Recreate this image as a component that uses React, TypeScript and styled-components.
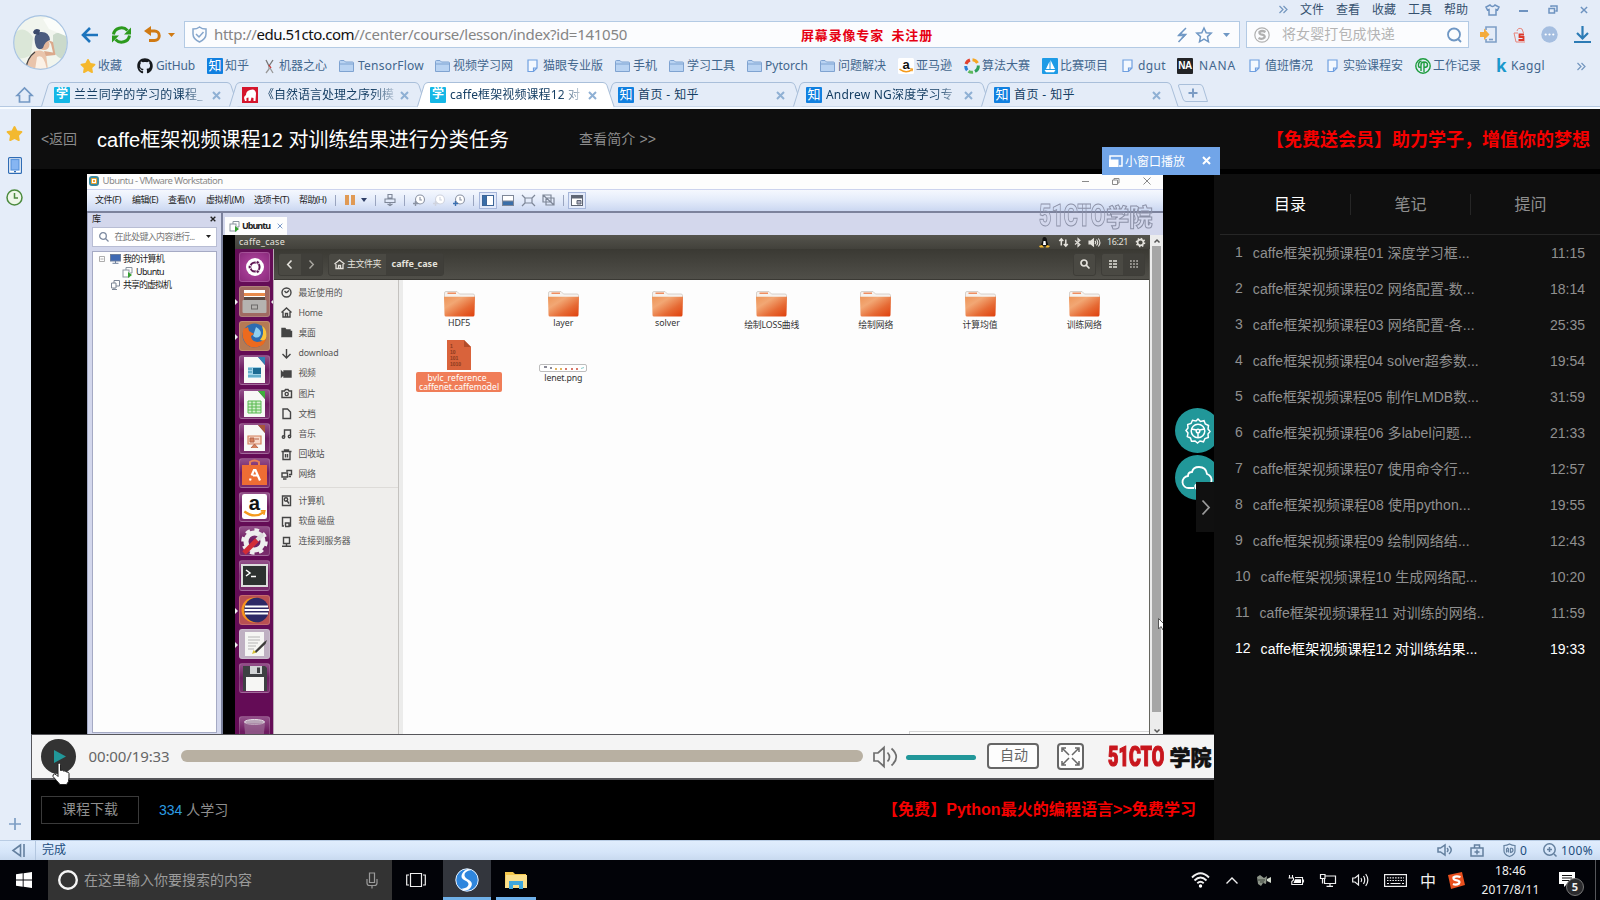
import React, { useLayoutEffect, useRef, useState } from "react";
import styled, { createGlobalStyle, css } from "styled-components";
import { FaGithub, FaStar } from "react-icons/fa";

const ui = `"Noto Sans", "Noto Sans CJK SC", sans-serif`;
const arial = `"Liberation Sans", "Noto Sans CJK SC", sans-serif`;

const Global = createGlobalStyle`
  * { box-sizing: border-box; }
  body { margin: 0; background: #000; overflow: hidden; font-family: ${ui}; }
  svg { display: block; flex: none; overflow: visible; }
`;

/* ---------- shared pieces ---------- */

const FitBox = styled.span<{ $w: number }>`
  display: inline-block;
  width: ${(p) => p.$w}px;
  white-space: pre;
  flex: none;
`;

/** Tracks a label out (or in) so that it fills the given width. */
function Fit({ w, children }: { w: number; children: string }) {
  const ref = useRef<HTMLSpanElement>(null);
  const [spacing, setSpacing] = useState(0);
  useLayoutEffect(() => {
    const el = ref.current;
    if (!el) return;
    setSpacing((w - el.getBoundingClientRect().width) / Array.from(children).length);
  }, [w, children]);
  return (
    <FitBox $w={w}>
      <span ref={ref} style={{ letterSpacing: spacing }}>{children}</span>
    </FitBox>
  );
}

type IconProps = {
  w: number; h?: number; vb?: string; color?: string; fill?: string; sw?: number; children?: React.ReactNode;
};
function Icon({ w, h = w, vb = `0 0 ${w} ${h}`, color = "currentColor", fill = "none", sw = 1.5, children }: IconProps) {
  return (
    <svg width={w} height={h} viewBox={vb} fill={fill} stroke={sw ? color : "none"} strokeWidth={sw || 1}>
      {children}
    </svg>
  );
}

const Cell = styled.div<{ $w: number }>`
  flex: none;
  width: ${(p) => p.$w}px;
  display: flex;
  align-items: center;
  white-space: nowrap;
`;
const Spring = styled.div`flex: 1;`;

const Screen = styled.div`
  width: 1600px;
  height: 900px;
  overflow: hidden;
  display: flex;
  flex-direction: column;
`;

/* ---------- browser chrome ---------- */

const Chrome = styled.header`
  height: 109px;
  background: #e4ecf8;
  color: #2f5379;
  font-size: 12px;
  line-height: 16px;
`;
const ChromeTop = styled.div`display: flex; height: 82px;`;
const AvatarCol = styled.div`width: 78px; padding: 15px 0 0 13px;`;
const ChromeRows = styled.div`flex: 1; display: flex; flex-direction: column;`;
const MenuRow = styled.div`height: 21px; display: flex; align-items: center; padding-bottom: 2px; color: #34506e;`;
const AddressRow = styled.div`height: 27px; display: flex; align-items: center; padding-left: 3px;`;
const BookmarkRow = styled.div`height: 34px; display: flex; align-items: center; padding: 2px 0 0 2px; color: #42668d;`;
const Field = styled.div<{ $w: number; $ml?: number }>`
  width: ${(p) => p.$w}px;
  margin-left: ${(p) => p.$ml ?? 0}px;
  height: 27px;
  flex: none;
  background: #fbfcfe;
  border: 1px solid #b3cae4;
  display: flex;
  align-items: center;
  padding-left: 7px;
  color: #6f97c4;
  white-space: nowrap;
`;
const Url = styled.div`
  display: flex;
  padding: 0 0 2px 7px;
  font-size: 15px;
  line-height: 22px;
  color: #858585;
  b { font-weight: 400; color: #111; }
`;
const Unregistered = styled.div`
  margin-left: 174px;
  width: 376px;
  color: #e60012;
  font: 700 13px/20px "Noto Sans CJK SC", sans-serif;
`;
const Query = styled.div`width: 177px; padding: 0 0 1px 12px; font-size: 14px; color: #b4b4b4;`;

const Avatar = () => (
  <Icon w={55} h={55} vb="0 0 55 55" sw={0}>
    <clipPath id="av"><circle cx="27.5" cy="27.5" r="26.5" /></clipPath>
    <g clipPath="url(#av)">
      <rect width="55" height="55" fill="#f1f5ee" />
      <path d="M0 20 Q10 8 20 22 L18 40 Q8 46 0 42Z" fill="#dbe7d8" />
      <path d="M40 20 Q48 14 55 24 V46 Q44 44 40 36Z" fill="#cbdacb" />
      <path d="M30 4 Q42 0 55 12 V22 L36 14Z" fill="#fbfdfa" />
      <path d="M22 36 Q30 34 33 39 L35 55 H12 Q14 42 22 36Z" fill="#e9c4ab" />
      <path d="M24 42 Q31 38 34 55 H22Z" fill="#fbf1e6" />
      <path d="M31 36 L40 37.500 L38 29 L35 25 L40 27 L42.500 40 L33 41Z" fill="#dba98c" />
      <circle cx="31" cy="29.500" r="5.500" fill="#e3b79b" />
      <path d="M22 28 Q20 19 27 17 Q36 16 37 25 Q32 26 30 33 Q24 37 22 28Z" fill="#4b5c7e" />
      <path d="M20 17 Q22 12 27 15 L26 20 L21 19Z" fill="#3b4a6c" />
      <path d="M22 37 Q14 43 13 54" stroke="#444" strokeWidth="1.3" fill="none" />
    </g>
    <circle cx="27.5" cy="27.5" r="26.8" stroke="#a9c4e2" strokeWidth="1.2" />
  </Icon>
);

const FolderIcon = () => (
  <Icon w={15} h={14} color="#7fa3d1" sw={1} fill="#b9d3f2">
    <path d="M.5 12.5V2.5Q.5 1.5 1.5 1.5H5L6.5 3H13.5Q14.5 3 14.5 4V12.5Z" />
    <path d="M.5 5H14.5" />
  </Icon>
);
const PageIcon = () => (
  <Icon w={11} h={14} color="#6f9fe0" sw={1.2} fill="#f3f8ff">
    <path d="M1 1H10V9L6.500 12.500H1Z M10 9H6.500V12.500" />
  </Icon>
);
const Tile = styled.div<{ $bg: string; $size?: number; $c?: string }>`
  width: ${(p) => p.$size ?? 16}px;
  height: ${(p) => p.$size ?? 16}px;
  flex: none;
  border-radius: 1px;
  background: ${(p) => p.$bg};
  color: ${(p) => p.$c ?? "#fff"};
  font: 400 13px/15px ${arial};
  text-align: center;
`;
const Zhi = () => <Tile $bg="#1180e0">知</Tile>;
const XueTile = styled(Tile)`font-weight: 700; font-size: 12px;`;
const Xue = () => <XueTile $bg="#14b7e6">学</XueTile>;
const Na = styled(Tile)`font-weight: 700; font-size: 10px; letter-spacing: -0.4px; line-height: 16px;`;
const Kaggle = styled.b`font: 700 17px/18px ${ui}; color: #1a98cc;`;

const AmazonMark = ({ s = 16 }: { s?: number }) => (
  <Icon w={s} vb="0 0 16 16" sw={0}>
    <rect width="16" height="16" rx="1.500" fill="#fff" />
    <text x="8" y="10.500" textAnchor="middle" fontFamily="Liberation Sans" fontWeight="700" fontSize="13" fill="#111">a</text>
    <path d="M1.500 11.200Q8 16 14 11.600" stroke="#f59a1b" strokeWidth="1.500" fill="none" />
    <path d="M12 10.800H14.600L14 13.400" stroke="#f59a1b" strokeWidth="1" fill="none" />
  </Icon>
);
const RingIcon = () => (
  <Icon w={16} sw={3}>
    <path d="M2 6A6.300 6.300 0 0 1 6 2" stroke="#e2412f" />
    <path d="M8.500 1.700A6.300 6.300 0 0 1 13.500 5" stroke="#f5a623" />
    <path d="M14.300 7.500A6.300 6.300 0 0 1 11 13.500" stroke="#2e9f5a" />
    <path d="M9 14.300A6.300 6.300 0 0 1 4.500 13.200" stroke="#5cb85c" />
    <path d="M3.200 12.200A6.300 6.300 0 0 1 1.700 8" stroke="#2c7fd6" />
  </Icon>
);
const BoatIcon = () => (
  <Icon w={16} sw={0}>
    <rect width="16" height="16" rx="1" fill="#1d9be6" />
    <path d="M8.500 2V11H13Z M7.500 3.500V11H4Z M2.500 12H13.500L12 14.300H4Z" fill="#fff" />
  </Icon>
);
const GreenIcon = () => (
  <Icon w={16} color="#1f9d3f" sw={1.4}>
    <circle cx="8" cy="8" r="7.200" />
    <path d="M9 3.500V14M6 13V7Q6 4 9 4Q12.500 4 12.500 7Q12.500 9.500 9 9.500M6.500 3Q3 4 3.500 8Q3.500 9.500 6 9.500" />
  </Icon>
);
const RobotIcon = () => (
  <Icon w={11} h={15} color="#999" sw={1.3}>
    <path d="M2 1L5 7L9 1" stroke="#777" />
    <path d="M5 7V10L2 14M6 9L9 14" />
    <path d="M5 6L7 9" stroke="#c33" />
  </Icon>
);

const bookmarks: [number, number, string, number, React.ReactNode][] = [
  [80, 98, "收藏", 24, <FaStar size={16} color="#f5b82e" />],
  [137, 156, "GitHub", 39, <FaGithub size={16} color="#16191d" />],
  [207, 225, "知乎", 24, <Zhi />],
  [264, 279, "机器之心", 48, <RobotIcon />],
  [339, 358, "TensorFlow", 66, <FolderIcon />],
  [435, 453, "视频学习网", 60, <FolderIcon />],
  [527, 543, "猫眼专业版", 60, <PageIcon />],
  [615, 633, "手机", 24, <FolderIcon />],
  [669, 687, "学习工具", 48, <FolderIcon />],
  [747, 765, "Pytorch", 43, <FolderIcon />],
  [820, 838, "问题解决", 48, <FolderIcon />],
  [898, 916, "亚马逊", 36, <AmazonMark />],
  [964, 982, "算法大赛", 48, <RingIcon />],
  [1042, 1060, "比赛项目", 48, <BoatIcon />],
  [1122, 1138, "dgut", 28, <PageIcon />],
  [1177, 1199, "NANA", 37, <Na $bg="#222326">NA</Na>],
  [1249, 1265, "值班情况", 48, <PageIcon />],
  [1327, 1343, "实验课程安", 60, <PageIcon />],
  [1415, 1433, "工作记录", 48, <GreenIcon />],
  [1496, 1511, "Kaggl", 34, <Kaggle>k</Kaggle>],
  [1577, 1600, "", 0, null],
];

const Chevrons = () => (
  <Icon w={9} h={9} color="#7396bf" sw={1.2}><path d="M.5 1L4 4.500L.5 8M4.500 1L8 4.500L4.500 8" /></Icon>
);

const TabRow = styled.div`
  height: 27px;
  display: flex;
  align-items: flex-start;
  background: linear-gradient(#e4ecf8 24px, #b5c9e2 24px, #b5c9e2 25px, #f7fbff 25px);
`;
const HomeCell = styled.div`width: 41px; padding: 5px 0 0 16px;`;
const TabBox = styled.div<{ $active?: boolean }>`
  width: 188px;
  height: 27px;
  position: relative;
  z-index: ${(p) => (p.$active ? 2 : 1)};
  display: flex;
  align-items: center;
  padding: 0 0 1px 13px;
  color: #153e63;
  > svg:first-child { position: absolute; left: 0; top: 0; }
`;
const TabFace = styled.div`position: relative; display: flex; align-items: center;`;
const TabText = styled.div<{ $faded?: boolean }>`
  width: 134px;
  margin: 0 4px 0 4px;
  white-space: nowrap;
  ${(p) => p.$faded && css`mask-image: linear-gradient(90deg, #000 110px, rgba(0, 0, 0, 0.2) 132px);`}
`;
const NewTab = styled.div`padding: 2px 0 0 9px;`;

const Cross = ({ s = 9, c = "#8fb0d4", sw = 2 }: { s?: number; c?: string; sw?: number }) => (
  <Icon w={s} vb="0 0 9 9" color={c} sw={sw}><path d="M1 1L8 8M8 1L1 8" /></Icon>
);

function Tab({ icon, text, w, active, faded }: { icon: React.ReactNode; text: string; w: number; active?: boolean; faded?: boolean }) {
  return (
    <TabBox $active={active}>
      <Icon w={198} h={27} color="#a9bfda" sw={1} fill={active ? "#fff" : "#e4ecf8"}>
        {active && <rect x="1" y="24" width="195" height="3" stroke="none" />}
        <path d="M.5 24.500L7 3.500Q8 .5 11 .5H186Q189 .5 190 3.500L197 24.500" />
      </Icon>
      <TabFace>
        {icon}
        <TabText $faded={faded}><Fit w={w}>{text}</Fit></TabText>
        <Cross />
      </TabFace>
    </TabBox>
  );
}

const ElephantIcon = () => (
  <Icon w={16} sw={0}>
    <rect width="16" height="16" fill="#d5152c" />
    <path d="M3 14L2 11Q2 9 4 8Q4 4 8 3Q13 1 14 6L13.500 14H11.500V11L9.500 10.500L8.500 14H6.500V10.500L4.500 11L4.500 14Z" fill="#fff" />
  </Icon>
);

function BrowserChrome() {
  return (
    <Chrome>
      <ChromeTop>
        <AvatarCol><Avatar /></AvatarCol>
        <ChromeRows>
          <MenuRow>
            <Spring />
            <Cell $w={21}><Chevrons /></Cell>
            <Cell $w={36}>文件</Cell>
            <Cell $w={36}>查看</Cell>
            <Cell $w={36}>收藏</Cell>
            <Cell $w={36}>工具</Cell>
            <Cell $w={41}>帮助</Cell>
            <Cell $w={34}>
              <Icon w={15} h={12} color="#6e93c0"><path d="M5 1L1 3L2.500 6L4 5.500V11H11V5.500L12.500 6L14 3L10 1Q7.500 4 5 1Z" /></Icon>
            </Cell>
            <Cell $w={29}><Icon w={10} h={9} color="#6e93c0" sw={2}><path d="M0 6H9" /></Icon></Cell>
            <Cell $w={32}><Icon w={10} h={9} color="#6e93c0"><path d="M1 3.500H6.500V8H1ZM3 2V1H9V6H7.500" /></Icon></Cell>
            <Cell $w={20}><Cross c="#6e93c0" sw={1.600} s={8} /></Cell>
          </MenuRow>
          <AddressRow>
            <Cell $w={30}><Icon w={18} h={16} color="#1d74bd" sw={2.600}><path d="M17 8H2M9 1L2 8L9 15" /></Icon></Cell>
            <Cell $w={33}>
              <Icon w={21} h={18} color="#2c9a1d" sw={3}>
                <path d="M2.500 8.500A8 7.500 0 0 1 16.500 4.500" /><path d="M18.500 9.500A8 7.500 0 0 1 4.500 13.500" />
                <path d="M20 1.500V8.500H13Z M1 16.500V9.500H8Z" fill="#2c9a1d" stroke="none" />
              </Icon>
            </Cell>
            <Cell $w={24}>
              <Icon w={17} h={17} color="#d07a13" sw={3}>
                <path d="M4 5H10.500A4.700 4.700 0 0 1 10.500 14.500H5" /><path d="M7 0V10L0 5Z" fill="#d07a13" stroke="none" />
              </Icon>
            </Cell>
            <Cell $w={16}><Icon w={7} h={4} sw={0} fill="#d07a13"><path d="M0 0H7L3.500 4Z" /></Icon></Cell>
            <Field $w={1056}>
              <Icon w={15} h={17} color="#86a6cc"><path d="M7.500 1Q10 3 14 3V8Q14 13 7.500 16Q1 13 1 8V3Q5 3 7.500 1ZM4 8L7 11L11.500 6" /></Icon>
              <Url>
                <Fit w={42.500}>http://</Fit><b><Fit w={97.500}>edu.51cto.com</Fit></b>
                <Fit w={273}>//center/course/lesson/index?id=141050</Fit>
              </Url>
              <Unregistered><Fit w={132}>屏幕录像专家  未注册</Fit></Unregistered>
              <Cell $w={19}><Icon w={10} h={16} sw={1.500}><path d="M9 1L2 8H8L1.500 15" /><path d="M5 5.500L2 8.500H5.500M5 7.500H8.500L5 11" /></Icon></Cell>
              <Cell $w={27}><Icon w={16} sw={1.500}><path d="M8 1L10.200 5.700L15.200 6.200L11.500 9.600L12.500 14.800L8 12.200L3.500 14.800L4.500 9.600L.8 6.200L5.800 5.700Z" /></Icon></Cell>
              <Icon w={7} h={4} sw={0} fill="#6f97c4"><path d="M0 0H7L3.500 4Z" /></Icon>
            </Field>
            <Field $w={223} $ml={6}>
              <Cell $w={16}>
                <Icon w={16} color="#b0b0b0" sw={1.200}><circle cx="8" cy="8" r="7.200" /><path d="M11.500 5Q8 3 5.500 5Q5 7 8 7.700Q11.500 8.500 10.500 10.500Q8 13 4.500 11" strokeWidth="2.300" /></Icon>
              </Cell>
              <Query><Fit w={113}>将女婴打包成快递</Fit></Query>
              <Cell $w={16}><Icon w={15} h={16} sw={1.800}><circle cx="7" cy="7.500" r="6" /><path d="M11 12L14 15" /></Icon></Cell>
            </Field>
            <Cell $w={44}>
              <Spring />
              <Cell $w={33}>
                <Icon w={17} h={17} color="#7d9ec6" sw={1.600}>
                  <path d="M6 4V1H16V16H6V13" /><path d="M9 13.500H13" /><path d="M0 6H4V2.500L9.500 8.500L4 14V11H0Z" fill="#f3ab3c" stroke="none" />
                </Icon>
              </Cell>
            </Cell>
            <Cell $w={28}>
              <Icon w={13} h={16} color="#e8847a" sw={1}><path d="M1 6L3 15H12M4 4Q5 0 9 2L10.500 6M1 6H5" /><path d="M11 7.500H6.500V10H10.500V13H5.500" stroke="#dc3b2c" strokeWidth="1.800" /></Icon>
            </Cell>
            <Cell $w={33}>
              <Icon w={17} sw={0} fill="#a5bee0"><circle cx="8.500" cy="8.500" r="8.200" /><g fill="#fff"><circle cx="4.700" cy="8.500" r="1.100" /><circle cx="8.500" cy="8.500" r="1.100" /><circle cx="12.300" cy="8.500" r="1.100" /></g></Icon>
            </Cell>
            <Icon w={17} h={17} color="#2c7bb5" sw={2.200}><path d="M8.500 0V12M3 7L8.500 12.500L14 7M0 16H17" /></Icon>
          </AddressRow>
          <BookmarkRow>
            {bookmarks.slice(0, -1).map(([x, tx, label, w, icon], i) => (
              <Cell key={i} $w={bookmarks[i + 1][0] - x}>
                <Cell $w={tx - x}>{icon}</Cell>
                <Fit w={w}>{label}</Fit>
              </Cell>
            ))}
            <Chevrons />
          </BookmarkRow>
        </ChromeRows>
      </ChromeTop>
      <TabRow>
        <HomeCell><Icon w={17} h={16} color="#7398c4" sw={1.700}><path d="M1 8.500L8.500 1L16 8.500H13.500V15H3.500V8.500Z" /></Icon></HomeCell>
        <Tab icon={<Xue />} text="兰兰同学的学习的课程_" w={129} faded />
        <Tab icon={<ElephantIcon />} text="《自然语言处理之序列模" w={132} faded />
        <Tab icon={<Xue />} text="caffe框架视频课程12 对" w={130} active faded />
        <Tab icon={<Zhi />} text="首页 - 知乎" w={61} />
        <Tab icon={<Zhi />} text="Andrew NG深度学习专" w={127} faded />
        <Tab icon={<Zhi />} text="首页 - 知乎" w={61} />
        <NewTab>
          <Icon w={30} h={18} color="#a9bfda" sw={1}>
            <path d="M.5 2Q0 .5 2 .5H22Q24 .5 25 3L29.500 17.500H8Q6 17.500 5 15Z" /><path d="M10.500 9H19.500M15 4.500V13.500" stroke="#7c9cc4" strokeWidth="2" />
          </Icon>
        </NewTab>
      </TabRow>
    </Chrome>
  );
}

/* ---------- page frame ---------- */

const Body = styled.div`height: 731px; display: flex; background: #000;`;
const SideStrip = styled.aside`
  width: 31px;
  background: #e5edf9;
  display: flex;
  flex-direction: column;
  align-items: center;
  padding: 16px 2px 10px 0;
`;
const Gap = styled.div<{ $h: number }>`height: ${(p) => p.$h}px; flex: none;`;
const Main = styled.main`flex: 1; position: relative; font-family: ${arial};`;
const TopBar = styled.div`
  height: 60px;
  background: #0e0e0e;
  display: flex;
  align-items: center;
  padding: 0 0 2px 10px;
  font-size: 14px;
  color: #8b8b8b;
`;
const Title = styled.h1`margin: 0; font-size: 20px; font-weight: 400; color: #fff; width: 482px;`;
const Promo = styled.div<{ $size: number }>`
  color: #f50000;
  font-weight: 700;
  font-size: ${(p) => p.$size}px;
  white-space: nowrap;
`;
const Popup = styled.div`
  position: absolute;
  left: 1071px;
  top: 38px;
  width: 118px;
  height: 28px;
  z-index: 5;
  background: #71a5e8;
  color: #fff;
  font-size: 12px;
  display: flex;
  align-items: center;
  padding: 0 0 1px 7px;
`;
const Columns = styled.div`display: flex; height: 671px;`;
const Left = styled.section`width: 1183px; position: relative;`;

/* ---------- course list ---------- */

const Panel = styled.aside`width: 386px; border-top: 5px solid #000; background: #0f0f0f; color: #8f8f8f;`;
const PanelTabs = styled.div`
  height: 61px;
  margin-left: 6px;
  padding: 1px 10px 0;
  border-bottom: 1px solid #262626;
  display: flex;
  align-items: center;
  font-size: 16px;
`;
const PanelTab = styled.div<{ $on?: boolean }>`
  width: 120px;
  height: 21px;
  line-height: 22px;
  text-align: center;
  color: ${(p) => (p.$on ? "#fff" : "#8f8f8f")};
  & + & { border-left: 1px solid #262626; }
`;
const Lesson = styled.div<{ $on?: boolean }>`
  height: 36px;
  padding: 0 15px 2px 21px;
  display: flex;
  align-items: center;
  font-size: 14px;
  color: ${(p) => (p.$on ? "#fff" : "#8f8f8f")};
  white-space: nowrap;
`;
const LessonNo = styled.span`margin-right: 10px;`;
const LessonTime = styled.span`padding-top: 2px;`;

const lessons: [string, string, number][] = [
  ["caffe框架视频课程01 深度学习框...", "11:15", 217],
  ["caffe框架视频课程02 网络配置-数...", "18:14", 222],
  ["caffe框架视频课程03 网络配置-各...", "25:35", 222],
  ["caffe框架视频课程04 solver超参数...", "19:54", 226],
  ["caffe框架视频课程05 制作LMDB数...", "31:59", 226],
  ["caffe框架视频课程06 多label问题...", "21:33", 219],
  ["caffe框架视频课程07 使用命令行...", "12:57", 217],
  ["caffe框架视频课程08 使用python...", "19:55", 218],
  ["caffe框架视频课程09 绘制网络结...", "12:43", 217],
  ["caffe框架视频课程10 生成网络配...", "10:20", 217],
  ["caffe框架视频课程11 对训练的网络..", "11:59", 225],
  ["caffe框架视频课程12 对训练结果...", "19:33", 217],
];

function CoursePanel() {
  return (
    <Panel>
      <PanelTabs><PanelTab $on>目录</PanelTab><PanelTab>笔记</PanelTab><PanelTab>提问</PanelTab></PanelTabs>
      {lessons.map(([title, time, w], i) => (
        <Lesson key={i} $on={i === 11}>
          <LessonNo>{i + 1}</LessonNo>
          <Fit w={w}>{title}</Fit>
          <Spring />
          <LessonTime>{time}</LessonTime>
        </Lesson>
      ))}
    </Panel>
  );
}

/* ---------- recorded desktop ---------- */

const VideoArea = styled.div`height: 565px; padding: 5px 0 0 56px; background: #000;`;
const Vm = styled.div`
  width: 1076px;
  height: 560px;
  font-size: 9px;
  line-height: 12px;
  font-family: ${ui};
  color: #333;
`;
const VmTitle = styled.div`
  height: 15px;
  background: #fdfdfd;
  display: flex;
  align-items: center;
  padding-left: 2px;
  padding-bottom: 1px;
  font-size: 9.500px;
  color: #8a8a8a;
`;
const VmMenu = styled.div`
  height: 24px;
  border-top: 1px solid #ccd3ee;
  border-bottom: 2px solid #7c829c;
  background: linear-gradient(#f5f8fe, #e3ebfa 50%, #cbd7f1);
  display: flex;
  align-items: center;
  padding-left: 8px;
  padding-bottom: 1px;
  color: #222;
  position: relative;
`;
const Sep = styled.i`width: 1px; height: 11px; background: #9aa5c0;`;
const Framed = styled.div`
  width: 18px;
  height: 17px;
  flex: none;
  margin-left: -3px;
  border: 1px solid #a6b6da;
  background: #e3eafa;
  display: flex;
  align-items: center;
  justify-content: center;
`;
const Watermark = styled.div`
  position: absolute;
  right: 10px;
  top: 13px;
  width: 114px;
  height: 26px;
  display: flex;
  z-index: 2;
`;
const LogoText = styled.span<{ $w: number; $h: number; $sx: number; $c: string; $size: number; $cjk?: boolean; $line: string }>`
  width: ${(p) => p.$w}px;
  height: ${(p) => p.$h}px;
  line-height: ${(p) => p.$h}px;
  font-family: ${(p) => (p.$cjk ? `"Noto Sans CJK SC"` : `Roboto`)}, sans-serif;
  font-size: ${(p) => p.$size}px;
  font-weight: 900;
  white-space: nowrap;
  color: ${(p) => p.$c};
  transform: scaleX(${(p) => p.$sx});
  transform-origin: 0 50%;
  -webkit-text-stroke: ${(p) => p.$line};
`;
const VmBody = styled.div`height: 521px; display: flex; background: #d3d7ec;`;
const Library = styled.div`width: 136px; border-left: 1px solid #a3aac6; border-right: 2px solid #7b819c; padding: 0 4px 1px 4px;`;
const LibHead = styled.div`height: 14px; display: flex; align-items: center; justify-content: space-between; padding: 0 1px 2px 0; color: #222;`;
const LibSearch = styled.div`
  height: 20px;
  background: #fff;
  border: 1px solid #b8bdd4;
  display: flex;
  align-items: center;
  padding: 0 0 1px 6px;
  color: #777;
`;
const Tree = styled.div`height: 482px; margin-top: 4px; background: #fdfdfd; border: 1px solid #a5aac4; padding: 0 0 0 6px;`;
const TreeRow = styled.div<{ $ml?: number }>`height: 13.300px; display: flex; align-items: center; padding-left: ${(p) => p.$ml ?? 0}px; color: #222;`;
const Stage = styled.div`flex: 1;`;
const VmTabs = styled.div`height: 22px; padding: 4px 0 0 2px;`;
const VmTab = styled.div`
  width: 62px;
  height: 18px;
  background: #fdfdfd;
  display: flex;
  align-items: center;
  padding-left: 4px;
  font-weight: 700;
  color: #222;
`;
const StageRow = styled.div`display: flex; height: 499px; background: #000; padding-left: 12px;`;
const Guest = styled.div`width: 915px;`;
const GuestBar = styled.div`
  height: 14px;
  padding-left: 4px;
  display: flex;
  align-items: center;
  color: #e4e2dc;
  background: linear-gradient(#55544d, #42413b);
`;
const GuestRow = styled.div`display: flex; height: 485px;`;
const Launcher = styled.div`
  width: 39px;
  overflow: hidden;
  background: #640c56;
  border-right: 1px solid #b9a9b6;
  padding: 3px 0 0 4px;
  display: flex;
  flex-direction: column;
  gap: 4px;
`;
const LaunchTile = styled.div<{ $bg?: string }>`
  height: 30.250px;
  width: 31px;
  flex: none;
  border-radius: 3px;
  background: ${(p) => p.$bg ?? "linear-gradient(#93508a, #6d1a60 50%, #7a2d6d)"};
  border: 1px solid rgba(255, 255, 255, 0.16);
  display: flex;
  align-items: center;
  justify-content: center;
  position: relative;
`;
const Running = styled.i<{ $right?: boolean }>`
  position: absolute;
  top: 12px;
  ${(p) => (p.$right ? "right: -5px; border-right: 3px solid #eee;" : "left: -5px; border-left: 3px solid #eee;")}
  border-top: 3px solid transparent;
  border-bottom: 3px solid transparent;
`;
const Files = styled.div`flex: 1; display: flex; flex-direction: column; border-right: 1px solid #66655f;`;
const Toolbar = styled.div`
  height: 31px;
  background: linear-gradient(#3a3933, #504f49);
  border-bottom: 1px solid #3a3934;
  display: flex;
  align-items: center;
  padding: 0 4px;
  color: #e4e2dc;
`;
const ToolGroup = styled.div<{ $w: number; $ml?: number }>`
  width: ${(p) => p.$w}px;
  margin-left: ${(p) => p.$ml ?? 0}px;
  height: 23px;
  display: flex;
  border: 1px solid #3e3d38;
  border-radius: 3px;
  background: #4a4943;
`;
const ToolPart = styled.div<{ $dark?: boolean; $w?: number }>`
  ${(p) => (p.$w ? `width: ${p.$w}px; flex: none;` : "flex: 1;")}
  display: flex;
  align-items: center;
  justify-content: center;
  gap: 2px;
  background: ${(p) => (p.$dark ? "#403f3a" : "transparent")};
`;
const FilesBody = styled.div`flex: 1; display: flex;`;
const Places = styled.div`width: 125px; background: #efeeec; border-right: 1px solid #c4c2bf; padding: 2.500px 0 0 6px; color: #4a4a48;`;
const Place = styled.div`height: 20.200px; display: flex; align-items: center; font-size: 8.800px; padding-left: 1px; color: #555;`;
const PlaceRule = styled.div`height: 4px; border-bottom: 1px solid #dddbd8; margin-bottom: 2.500px;`;
const Canvas = styled.div`
  flex: 1;
  border-left: 4px solid #ececeb;
  background: #fdfdfd;
  padding: 10.500px 0 0 4px;
  display: flex;
  flex-direction: column;
  color: #3c3c3c;
`;
const FileRow = styled.div`display: flex; height: 49px;`;
const FileItem = styled.div<{ $pt?: number }>`
  width: 104.200px;
  padding-top: ${(p) => p.$pt ?? 0}px;
  display: flex;
  flex-direction: column;
  align-items: center;
`;
const FileLabel = styled.div<{ $cjk?: boolean }>`font-size: 8.800px; line-height: 12px; padding-top: ${(p) => (p.$cjk ? 2.5 : 0)}px; color: #333;`;
const Selected = styled.div`
  width: 86px;
  height: 21px;
  margin-top: 2px;
  padding-top: 1px;
  border-radius: 2px;
  background: #f07d58;
  color: #fff;
  font-size: 8.500px;
  line-height: 9.500px;
  text-align: center;
`;
const Hint = styled.div`margin-top: auto; align-self: flex-end; width: 240px; height: 3px; border: 1px solid #d5d5d5; border-width: 1px 0 0 1px;`;
const Scroll = styled.div`width: 13px; background: #ececec; display: flex; flex-direction: column; align-items: center; padding: 4px 0 1px;`;
const Thumb = styled.div`width: 9px; height: 466px; margin: 3px 0 auto; background: #a6a6a6;`;

const VmIcon = () => (
  <Icon w={11} h={12} color="#8b959f" sw={1}>
    <rect x="1" y="4" width="6" height="7" fill="#fff" /><path d="M4 4V1.500H10V7H8" /><path d="M6 6V12L10 9Z" fill="#35a02f" stroke="none" />
  </Icon>
);
const ClockMini = ({ c = "#8b93a3", mark = "#8b93a3" }: { c?: string; mark?: string }) => (
  <Icon w={12} h={12} color={c} sw={1.1}><circle cx="7" cy="5.500" r="4.500" fill="#fff" /><path d="M7 3V6H9" /><path d="M0 9.500H5M2.500 7V12" stroke={mark} strokeWidth="1.400" /></Icon>
);
const OrangeFolder = () => (
  <Icon w={31} h={26} sw={0}>
    <defs>
      <linearGradient id="of" x1="0" y1="0" x2="1" y2="1"><stop offset="0" stopColor="#ee9559" /><stop offset=".3" stopColor="#f2a774" /><stop offset=".65" stopColor="#e66a34" /><stop offset="1" stopColor="#df3f0c" /></linearGradient>
    </defs>
    <path d="M.5 8V2Q.5 .5 2 .5H13L15.500 3H29Q30.500 3 30.500 4.500V8Z" fill="#f6f2ee" stroke="#cfc6c0" strokeWidth=".8" />
    <path d="M3.500 2.200H12" stroke="#ee7b45" strokeWidth="1.300" />
    <path d="M0 5.800H31L30.500 24Q30.400 25.500 29 25.500H2Q.6 25.500 .5 24Z" fill="url(#of)" />
  </Icon>
);

const docTile = (accent: string, body: React.ReactNode) => (
  <Icon w={25} h={28} sw={0}><path d="M2 1H16L23 9V27H2Z" fill="#f8f8f6" /><path d="M16 1H23V9Z" fill={accent} />{body}</Icon>
);

const launcherItems: { bg?: string; run?: boolean; both?: boolean; art: React.ReactNode }[] = [
  { bg: "radial-gradient(#b64aa5, #8b2a7c)", art: <Icon w={20} sw={0}><circle cx="10" cy="10" r="9" fill="#fff" /><circle cx="10" cy="10" r="4.600" fill="none" stroke="#5f1653" strokeWidth="2" /><g fill="#5f1653" stroke="#fff" strokeWidth=".8"><circle cx="4.700" cy="10" r="1.700" /><circle cx="12.700" cy="5.400" r="1.700" /><circle cx="12.700" cy="14.600" r="1.700" /></g></Icon> },
  { bg: "#a06a62", run: true, both: true, art: <Icon w={27} h={26} sw={0}><path d="M3 2H24V14H3Z" fill="#fff" /><path d="M3 5H24V8H3Z" fill="#e88b4d" /><path d="M3 9H24V12H3Z" fill="#5a4a44" /><rect x="1.500" y="12" width="24" height="13" rx="1" fill="#b5b3b0" /><rect x="10.500" y="17" width="6" height="4" fill="none" stroke="#6d6b69" /></Icon> },
  { bg: "#b57a54", run: true, art: <Icon w={27} sw={0}><circle cx="13.500" cy="13.500" r="12" fill="#2c6cb0" /><path d="M15 5Q22 9 19 14Q16 17 12 14" fill="#8fd0f0" /><path d="M3 6Q1 10 2 16Q5 26 15 25.500Q26 24 25.500 12Q24 20 16 20Q10 19 10 14L13 12L8 9L7 5Q4 7 3 6Z" fill="#ec6a1e" /><path d="M25.500 12Q25 6 21 4Q24 12 19 18Q26 20 25.500 12Z" fill="#f9c33a" /></Icon> },
  { art: docTile("#2f80b5", <><path d="M6 11H19V22H6Z" fill="#9fd2e8" /><path d="M11 12H19V18H11Z" fill="#1b6b93" /><path d="M6 13H10M6 16H10M6 20H19" stroke="#2889ad" /></>) },
  { art: docTile("#3faf3c", <path d="M6 11H19V23H6ZM6 14H19M6 17H19M6 20H19M10 11V23M14 11V23" fill="#d5f0cf" stroke="#57b84f" strokeWidth="1" />) },
  { art: docTile("#a8563a", <><path d="M6 12H19V20H6Z" fill="#f7d9c9" stroke="#d4805c" strokeWidth="1.200" /><path d="M8 14H12V18H8ZM13 15H17M9 24L12.500 20L16 24" fill="#d4805c" stroke="#b5654a" strokeWidth="1" /></>) },
  { art: <Icon w={27} sw={0}><path d="M9 7V3Q13.500 0 18 3V7" fill="none" stroke="#e98055" strokeWidth="2" /><path d="M1 6H26V26H1Z" fill="#ee6d34" /><path d="M9 21.500L9.600 19.500M10.600 16.500L13 11H14.500L19 21.500M12 16.500H16" fill="none" stroke="#fff" strokeWidth="2.200" /></Icon> },
  { art: <AmazonMark s={25} /> },
  { art: <Icon w={27} sw={0}><circle cx="13.500" cy="13.500" r="8.500" fill="none" stroke="#eee" strokeWidth="5" /><circle cx="13.500" cy="13.500" r="11.800" fill="none" stroke="#eee" strokeWidth="3" strokeDasharray="4.600 4.600" /><path d="M3 25L16 12" stroke="#d22b37" strokeWidth="5" /><path d="M16 12L22 6" stroke="#ddd" strokeWidth="4" /></Icon> },
  { art: <Icon w={27} h={23} sw={0}><rect width="27" height="23" fill="#dcdcdc" /><rect x="2" y="2" width="23" height="19" fill="#2c3130" /><path d="M5 6L9 9L5 12M10 12.500H15" fill="none" stroke="#fff" strokeWidth="1.500" /></Icon> },
  { bg: "#b84f52", run: true, art: <Icon w={28} sw={0}><circle cx="13" cy="14" r="12.500" fill="#f7941e" /><circle cx="15.500" cy="14" r="12.300" fill="#2d2a66" /><path d="M4 10.500H27M3.500 14H28M4 17.500H27" stroke="#fff" strokeWidth="1.800" /></Icon> },
  { bg: "#bfb0c2", run: true, art: <Icon w={25} h={28} sw={0}><path d="M3 2H22V26H3Z" fill="#f5f5f3" /><path d="M6 7H18M6 10H18M6 13H16M6 16H14M6 19H12" stroke="#b5b5b5" /><path d="M11 23L22 12L25 10L23.500 14L14 23Z" fill="#3c3c3a" /><path d="M10 24L11.500 20L14.500 22.500Z" fill="#d9c23b" /></Icon> },
  { art: <Icon w={24} h={26} sw={0}><path d="M0 1H22L24 3V26H0Z" fill="#3e4043" /><rect x="7" y="1" width="12" height="8" fill="#d2d4d6" /><rect x="14" y="2.500" width="3" height="5.500" fill="#3e4043" /><rect x="3" y="12" width="18" height="14" fill="#f6f6f4" /></Icon> },
];

const placeArt: [string, React.ReactNode][] = [
  ["最近使用的", <><circle cx="5.500" cy="5.500" r="4.500" /><path d="M5.500 5.800L8 3.500M3.500 4L5.500 6" /></>],
  ["Home", <path d="M.5 5.500L5.500 1L10.500 5.500M2 5V10H9V5M4.500 10V6.500H6.500V10" />],
  ["桌面", <path d="M1 10V1.500H4L5 3H9V4M1 9.500L2 4.500H10.500V9.500Z" fill="#444" />],
  ["download", <path d="M5.500 1V9.500M1.500 6L5.500 10L9.500 6" />],
  ["视频", <path d="M3 3H10V9H3ZM.5 3.500V8.500L3 6Z" fill="#444" />],
  ["图片", <><path d="M1 3H3.500L4.500 1.500H7L8 3H10.500V9.500H1Z" /><circle cx="5.700" cy="6" r="1.600" /></>],
  ["文档", <path d="M2 1H6.500L9.500 4V10.500H2Z" />],
  ["音乐", <><path d="M3.500 9V2H9.500V8" /><circle cx="2.500" cy="9" r="1.200" /><circle cx="8.500" cy="8.500" r="1.200" /></>],
  ["回收站", <path d="M.5 2.500H10.500M3.500 2.500V1H7.500V2.500M2 3V10.500H9V3M4.500 5V8.500M6.500 5V8.500" />],
  ["网络", <><path d="M1 4H6.500V8H1ZM2 10H5.500" /><path d="M6 3V1.500H10.500V5.500H8M7.500 7.500H10" /></>],
  ["计算机", <><path d="M1.500 1H9.500V10.500H1.500Z" /><circle cx="5" cy="4.500" r="1.700" /><path d="M5.500 5L8 8.500" /></>],
  ["软盘 磁盘", <path d="M3 10H1.500V1.500H9.500V10H8M4.500 10V7H8V10.500H4" />],
  ["连接到服务器", <path d="M2.500 1.500H8.500V7.500H2.500ZM5.500 7.500V10M1 10.300H10" />],
];
const placeWidths = [44, 24, 17, 40, 17, 17, 17, 17, 26, 17, 26, 36, 52];

function PlaceItem({ i }: { i: number }) {
  return (
    <Place>
      <Cell $w={17.500}><Icon w={11} color="#444" sw={1.400}>{placeArt[i][1]}</Icon></Cell>
      <Fit w={placeWidths[i]}>{placeArt[i][0]}</Fit>
    </Place>
  );
}

function Desktop() {
  return (
    <Vm>
      <VmTitle>
        <Cell $w={13.500}><Icon w={10} h={10} color="#3a8aa0" sw={2}><rect x="1" y="1" width="8" height="8" rx="2" fill="#f1a42f" /><rect x="3.500" y="3.500" width="3" height="3" stroke="#fff" strokeWidth="1" /></Icon></Cell>
        <Fit w={120}>Ubuntu - VMware Workstation</Fit>
        <Spring />
        <Cell $w={30}><Icon w={7} h={7} sw={1}><path d="M0 3.500H7" /></Icon></Cell>
        <Cell $w={31}><Icon w={7} h={7} sw={1}><path d="M.5 2H5.500V6.500H.5ZM2 2V.5H7V5H5.500" /></Icon></Cell>
        <Cell $w={20}><Icon w={8} h={8} sw={1}><path d="M.5 .5L7.500 7.500M7.500 .5L.5 7.500" /></Icon></Cell>
      </VmTitle>
      <VmMenu>
        <Cell $w={37}><Fit w={26}>文件(F)</Fit></Cell>
        <Cell $w={36}><Fit w={26}>编辑(E)</Fit></Cell>
        <Cell $w={38}><Fit w={27}>查看(V)</Fit></Cell>
        <Cell $w={48}><Fit w={38}>虚拟机(M)</Fit></Cell>
        <Cell $w={45}><Fit w={35}>选项卡(T)</Fit></Cell>
        <Cell $w={36}><Fit w={27}>帮助(H)</Fit></Cell>
        <Cell $w={10}><Sep /></Cell>
        <Cell $w={16}><Icon w={10} h={10} sw={0} fill="#e09a55"><path d="M0 0H4V10H0ZM6 0H10V10H6Z" /></Icon></Cell>
        <Cell $w={14}><Icon w={6} h={4} sw={0} fill="#2f3f66"><path d="M0 0H6L3 4Z" /></Icon></Cell>
        <Cell $w={9}><Sep /></Cell>
        <Cell $w={20}><Icon w={12} h={12} color="#7e8798" sw={1.100}><path d="M4 .5H8V4H4ZM1 5H11V8.500H1ZM6 8.500V11.500M3.500 10L6 11.500L8.500 10" /></Icon></Cell>
        <Cell $w={9}><Sep /></Cell>
        <Cell $w={20}><ClockMini /></Cell>
        <Cell $w={20}><ClockMini c="#cfd3de" mark="#cfd3de" /></Cell>
        <Cell $w={20}><ClockMini mark="#3b6fb0" /></Cell>
        <Cell $w={9}><Sep /></Cell>
        <Cell $w={20}><Framed><Icon w={12} h={11} color="#3d6597" sw={1}><rect x=".5" y=".5" width="11" height="10" fill="#fff" /><path d="M.5 .5H4.500V10.500H.5Z" fill="#3a6ea8" /></Icon></Framed></Cell>
        <Cell $w={20}><Icon w={12} h={11} color="#7e8798" sw={1}><rect x=".5" y=".5" width="11" height="10" fill="#fff" /><path d="M.5 6H11.500V10.500H.5Z" fill="#3a6ea8" /></Icon></Cell>
        <Cell $w={20}><Icon w={13} h={11} color="#7e8798" sw={1.200}><path d="M3 3H10V8H3ZM0 0L3 3M13 0L10 3M0 11L3 8M13 11L10 8" /></Icon></Cell>
        <Cell $w={21}><Icon w={13} h={12} color="#7e8798" sw={1.200}><path d="M1 1H9V8H1ZM4 4H12V11H4ZM1 1L12 11" /></Icon></Cell>
        <Cell $w={8}><Sep /></Cell>
        <Framed><Icon w={12} h={11} color="#5f6675" sw={1}><rect x=".5" y=".5" width="11" height="10" fill="#fff" /><path d="M.5 2H11.500" strokeWidth="3" /><path d="M6 5.500H10V9H6Z" fill="#aab" /></Icon></Framed>
        <Watermark>
          <LogoText $w={67} $h={26} $sx={0.69} $size={31} $c="transparent" $line="1px #8b90a6">51CTO</LogoText>
          <LogoText $w={46} $h={25} $sx={0.97} $size={24} $cjk $c="transparent" $line="1px #8b90a6">学院</LogoText>
        </Watermark>
      </VmMenu>
      <VmBody>
        <Library>
          <LibHead>库<Cross s={6} c="#222" /></LibHead>
          <LibSearch>
            <Cell $w={15.500}><Icon w={10} color="#7d8aa0" sw={1.300}><circle cx="4" cy="4" r="3.300" /><path d="M6.500 6.500L9.500 9.500" /></Icon></Cell>
            <Fit w={80}>在此处键入内容进行...</Fit>
            <Spring />
            <Cell $w={10}><Icon w={5} h={3} sw={0} fill="#222"><path d="M0 0H5L2.500 3Z" /></Icon></Cell>
          </LibSearch>
          <Tree>
            <TreeRow>
              <Cell $w={10.500}><Icon w={6} color="#999" sw={.8}><path d="M.5 .5H5.500V5.500H.5ZM1.500 3H4.500" /></Icon></Cell>
              <Cell $w={13.500}><Icon w={11} h={10} color="#6d7f9c" sw={1}><rect x=".5" y=".5" width="10" height="6.500" fill="#3f69b3" /><path d="M5.500 7V9M2.500 9.300H8.500" /></Icon></Cell>
              <Fit w={41}>我的计算机</Fit>
            </TreeRow>
            <TreeRow $ml={22.500}><Cell $w={14.500}><VmIcon /></Cell><Fit w={28}>Ubuntu</Fit></TreeRow>
            <TreeRow $ml={11.500}><Cell $w={12.500}><Icon w={9} h={10} color="#7d8796" sw={1}><path d="M.5 3H5V8H.5ZM3 3V.5H8.500V6H5M3 8V10M1 9.500H6" /></Icon></Cell><Fit w={48}>共享的虚拟机</Fit></TreeRow>
          </Tree>
        </Library>
        <Stage>
          <VmTabs><VmTab><Cell $w={13}><VmIcon /></Cell><Fit w={28}>Ubuntu</Fit><Cell $w={7} /><Cross s={6} c="#7a9ac9" sw={1.500} /></VmTab></VmTabs>
          <StageRow>
            <Guest>
              <GuestBar>
                <Fit w={46}>caffe_case</Fit>
                <Spring />
                <Cell $w={20}><Icon w={11} h={11} sw={0}><path d="M5.500 0Q8 0 8 4L9.500 9H1.500L3.500 4Q3 0 5.500 0Z" fill="#111" /><path d="M4.500 4H6.500L7 8H4Z" fill="#fff" /><path d="M0 9L3 8L5 10.500H1ZM6.500 10.500L8 8L11 9L9.500 10.500Z" fill="#f2b62d" /></Icon></Cell>
                <Cell $w={16}><Icon w={9} h={9} sw={1.500}><path d="M2.300 7.500V1M.3 3L2.300 .8L4.300 3M6.800 1.500V8M4.800 6L6.800 8.200L8.800 6" /></Icon></Cell>
                <Cell $w={14}><Icon w={6} h={9} sw={1.100}><path d="M0 2.500L5 6.500L3 8.500V.5L5 2.500L0 6.500" /></Icon></Cell>
                <Cell $w={18}><Icon w={12} h={9} sw={1.100}><path d="M0 3H2L4.500 1V8L2 6H0Z" fill="#e4e2dc" /><path d="M6 3Q7.500 4.500 6 6M7.500 1.500Q10 4.500 7.500 7.500M9.300 .5Q12.500 4.500 9.300 8.500" /></Icon></Cell>
                <Cell $w={29}><Fit w={21}>16:21</Fit></Cell>
                <Cell $w={14}><Icon w={9} sw={1.600}><circle cx="4.500" cy="4.500" r="2.900" /><circle cx="4.500" cy="4.500" r="4" strokeDasharray="1.500 1.600" /></Icon></Cell>
              </GuestBar>
              <GuestRow>
                <Launcher>
                  {launcherItems.map((it, i) => (
                    <LaunchTile key={i} $bg={it.bg}>{it.run && <Running />}{it.art}{it.both && <Running $right />}</LaunchTile>
                  ))}
                  <Gap $h={15} />
                  <LaunchTile><Icon w={23} h={24} sw={0}><ellipse cx="11.500" cy="3" rx="10" ry="2.500" fill="#b9a5b8" stroke="#e8e0e8" strokeWidth="1" /><path d="M1 4L3 24H20L22 4" fill="#a27a9c" opacity=".6" /></Icon></LaunchTile>
                </Launcher>
                <Files>
                  <Toolbar>
                    <ToolGroup $w={45}>
                      <ToolPart><Icon w={5} h={9} sw={1.600}><path d="M4.500 .5L.7 4.500L4.500 8.500" /></Icon></ToolPart>
                      <ToolPart $dark><Icon w={5} h={9} color="#a9a7a1" sw={1.400}><path d="M.5 .5L4.300 4.500L.5 8.500" /></Icon></ToolPart>
                    </ToolGroup>
                    <ToolGroup $w={116} $ml={5}>
                      <ToolPart $w={57}><Icon w={11} h={10} sw={1.300}><path d="M.5 5L5.500 1L10.500 5M2 5V9.500H9V5M4.500 9.500V6.500H6.500V9.500" /></Icon><Fit w={34}>主文件夹</Fit></ToolPart>
                      <ToolPart $dark><b><Fit w={46}>caffe_case</Fit></b></ToolPart>
                    </ToolGroup>
                    <Spring />
                    <ToolGroup $w={23}><ToolPart><Icon w={10} sw={1.700}><circle cx="4" cy="4" r="3" /><path d="M6.200 6.200L9.500 9.500" /></Icon></ToolPart></ToolGroup>
                    <ToolGroup $w={44} $ml={5}>
                      <ToolPart><Icon w={8} h={8} sw={1.700}><path d="M0 1H3M4 1H8M0 4H3M4 4H8M0 7H3M4 7H8" /></Icon></ToolPart>
                      <ToolPart $dark><Icon w={8} h={8} color="#b5b3ad" sw={1.500}><path d="M0 1H8M0 4H8M0 7H8" strokeDasharray="1.800 1.300" /></Icon></ToolPart>
                    </ToolGroup>
                  </Toolbar>
                  <FilesBody>
                    <Places>
                      {[0, 1, 2, 3, 4, 5, 6, 7, 8, 9].map((i) => <PlaceItem key={i} i={i} />)}
                      <PlaceRule />
                      {[10, 11, 12].map((i) => <PlaceItem key={i} i={i} />)}
                    </Places>
                    <Canvas>
                      <FileRow>
                        {([["HDF5", 22], ["layer", 20], ["solver", 25], ["绘制LOSS曲线", 55], ["绘制网络", 35], ["计算均值", 35], ["训练网络", 35]] as [string, number][]).map(([n, w], i) => (
                          <FileItem key={n}><OrangeFolder /><FileLabel $cjk={i > 2}><Fit w={w}>{n}</Fit></FileLabel></FileItem>
                        ))}
                      </FileRow>
                      <FileRow>
                        <FileItem>
                          <Icon w={24} h={30} sw={0}>
                            <path d="M0 0H17L24 7V30H0Z" fill="#d9633b" /><path d="M17 0V7H24Z" fill="#b24c2a" />
                            <g fill="#8a3a1e" fontFamily="Liberation Sans" fontWeight="700" fontSize="5"><text x="3" y="7.500">1</text><text x="3" y="13.500">10</text><text x="3" y="19.500">101</text><text x="3" y="26">1010</text></g>
                          </Icon>
                          <Selected><Fit w={63}>bvlc_reference_</Fit><br /><Fit w={80}>caffenet.caffemodel</Fit></Selected>
                        </FileItem>
                        <FileItem $pt={24}>
                          <Icon w={48} h={8} sw={0}><rect x=".5" y=".5" width="47" height="7" rx="1.500" fill="#fff" stroke="#bdbdbd" /><path d="M5 3H8M11 4H13" stroke="#667" strokeWidth="1.500" /><path d="M16 5H18M21 5H23" stroke="#d99a2b" strokeWidth="1.500" /><path d="M26 5H28M32 5H34M37 5H39" stroke="#cc4b3a" strokeWidth="1.500" /><path d="M42 4.500L45 3.500" stroke="#8cc" /></Icon>
                          <FileLabel><Fit w={38}>lenet.png</Fit></FileLabel>
                        </FileItem>
                      </FileRow>
                      <Hint />
                    </Canvas>
                  </FilesBody>
                </Files>
              </GuestRow>
            </Guest>
            <Scroll>
              <Icon w={6} h={4} color="#555"><path d="M.5 3.500L3 1L5.500 3.500" /></Icon>
              <Thumb />
              <Icon w={6} h={4} color="#555"><path d="M.5 .5L3 3L5.500 .5" /></Icon>
            </Scroll>
          </StageRow>
        </Stage>
      </VmBody>
    </Vm>
  );
}

/* ---------- player ---------- */

const FloatTools = styled.div`
  position: absolute;
  left: 1144px;
  top: 239px;
  width: 39px;
  height: 124px;
  overflow: hidden;
`;
const Bubble = styled.div`
  width: 45px;
  height: 45px;
  margin-bottom: 2px;
  border-radius: 50%;
  background: #219799;
  color: #fff;
  display: flex;
  align-items: center;
  justify-content: center;
`;
const Collapse = styled.div`
  position: absolute;
  left: 21px;
  top: 74px;
  width: 18px;
  height: 50px;
  background: #101010;
  color: #9a9a9a;
  display: flex;
  align-items: center;
  padding-left: 6px;
`;
const Pointer = styled.div`position: absolute; left: 1127px; top: 449px; width: 5px; height: 13px; overflow: hidden;`;
const Player = styled.div`
  height: 46px;
  border: 1px solid #56565a;
  border-width: 1px 0 2px 1px;
  background: #f4f4f4;
  display: flex;
  align-items: center;
  padding-left: 9px;
  color: #666;
  position: relative;
`;
const Play = styled.div`
  width: 35px;
  height: 35px;
  border-radius: 50%;
  background: #333;
  display: flex;
  align-items: center;
  padding-left: 13px;
  margin-bottom: 1px;
`;
const Hand = styled.div`position: absolute; left: 20px; top: 27px; z-index: 3;`;
const Time = styled.div`margin-left: 12.500px; width: 92.500px; padding-bottom: 2px; font: 400 15px/20px ${ui};`;
const Progress = styled.div`width: 682px; height: 12px; border-radius: 6px; background: #b8b0a2; margin: 0 10px 1px 0;`;
const Volume = styled.div`width: 70px; height: 5px; border-radius: 3px; background: #219799; margin: 2px 11px 0 8px;`;
const Quality = styled.div`
  width: 52px;
  height: 26px;
  border: 2px solid #666;
  border-radius: 4px;
  background: #fdfdfd;
  font-size: 14px;
  line-height: 21px;
  text-align: center;
  padding-left: 2px;
  margin: 0 18px 1px 0;
`;
const Brand = styled.div`display: flex; margin-left: 24px; padding-top: 1px; width: 105px;`;
const Footer = styled.div`height: 60px; display: flex; align-items: center; padding: 0 18px 1px 10px; font-size: 14px; color: #8f8f8f;`;
const Download = styled.div`
  width: 98px;
  height: 28px;
  border: 1px solid #3a3a3a;
  line-height: 25px;
  text-align: center;
  margin-right: 20px;
`;
const Learners = styled.div`padding-bottom: 2px;`;
const Blue = styled.span`color: #2c9ce2; margin-right: 4px;`;
const FooterPromo = styled(Promo)`padding-bottom: 3px;`;

function PlayerArea() {
  return (
    <Left>
      <VideoArea><Desktop /></VideoArea>
      <FloatTools>
        <Bubble>
          <Icon w={26} sw={1.500}>
            <path d="M13 1L15.500 3.500L19 2.700L20.300 6L23.500 7.500L23 11L25 13.500L23 16L23.300 19.500L20 20.500L18.500 23.800L15 23L12.500 25L10 23L6.500 23.300L5.500 20L2.300 18.500L3 15L1 12.500L3 10L2.700 6.500L6 5.500L7.500 2.300L11 3Z" />
            <circle cx="13" cy="13" r="6.800" /><circle cx="13" cy="13" r="1.800" /><path d="M6.500 11L11.500 12M19.500 11L14.500 12M13 15V19.500" />
          </Icon>
        </Bubble>
        <Bubble><Icon w={31} h={24} sw={1.800}><path d="M12 22H7A6 6 0 0 1 6 10Q6 6 10 6Q11 1 17 1Q24 1 25 8Q30 10 29.500 15Q29 19 26 21M15 18Q12 19 14 23" /></Icon></Bubble>
        <Collapse><Icon w={8} h={15} sw={1.800}><path d="M.5 .5L7 7.500L.5 14.500" /></Icon></Collapse>
      </FloatTools>
      <Pointer><Icon w={9} h={13} color="#555" sw={1} fill="#fff"><path d="M.5 .5V11L3 8.500L5 12L8 8Z" /></Icon></Pointer>
      <Player>
        <Play><Icon w={12} h={13} sw={0} fill="#219799"><path d="M0 0V13L12 6.500Z" /></Icon></Play>
        <Hand>
          <Icon w={18} h={23} color="#222" sw={1} fill="#fff">
            <path d="M6 13V2.500Q6 1 7.200 1Q8.500 1 8.500 2.500V8.500Q10.500 7.500 11.500 9Q13.500 8.300 14.300 10Q16.500 9.500 17 11.500V16Q17 20 14.500 22.500H8Q5 19 1 14.500Q.5 12.500 2.500 12Q4 12 6 14.500Z" />
          </Icon>
        </Hand>
        <Time><Fit w={81}>00:00/19:33</Fit></Time>
        <Progress />
        <Icon w={25} h={22} color="#6e6e6e" sw={1.700}><path d="M1 7H5L11 1.500V20.500L5 15H1ZM14.500 6.500Q18.500 11 14.500 15.500M18.500 2.500Q28 11 18.500 19.500" /></Icon>
        <Volume />
        <Quality>自动</Quality>
        <Icon w={27} color="#666" sw={2}><rect x="1" y="1" width="25" height="25" rx="3" fill="#fdfdfd" /><path d="M5 9V5H9M18 5H22V9M22 18V22H18M9 22H5V18M6 6L12 12M21 6L15 12M21 21L15 15M6 21L12 15" strokeWidth="1.500" /></Icon>
        <Brand>
          <LogoText $w={61.500} $h={26} $sx={0.67} $size={27} $c="#c8161d" $line="1.2px #c8161d">51CTO</LogoText>
          <LogoText $w={43.500} $h={24} $sx={1} $size={21} $cjk $c="#111" $line="0.6px #111">学院</LogoText>
        </Brand>
      </Player>
      <Footer>
        <Download>课程下载</Download><Learners><Blue>334</Blue>人学习</Learners>
        <Spring />
        <FooterPromo $size={16}><Fit w={314}>【免费】Python最火的编程语言&gt;&gt;免费学习</Fit></FooterPromo>
      </Footer>
    </Left>
  );
}

/* ---------- status bar and taskbar ---------- */

const StatusBar = styled.div`
  height: 20px;
  display: flex;
  align-items: center;
  background: linear-gradient(#e0edfd, #d5e5f9 60%, #c8d9ef);
  border-top: 1px solid #b9cce4;
  padding-bottom: 1px;
  font-size: 12px;
  color: #1d4d7c;
`;
const StatusCell = styled(Cell)`height: 19px; padding-left: 12px; border-right: 1px solid #b3c7e0; margin-right: 6px; color: #64809f;`;
const StatusText = styled.div`line-height: 16px; margin-top: -1px;`;
const Muted = styled(Cell)`color: #64809f;`;
const Taskbar = styled.div`height: 40px; display: flex; align-items: center; background: #020308; color: #f0f0f0;`;
const SearchBox = styled.div`
  width: 344px;
  height: 40px;
  background: #333;
  display: flex;
  align-items: center;
  padding: 0 14px 0 10px;
  font: 14px/20px ${arial};
  color: #9b9b9b;
`;
const TaskButton = styled.div<{ $w: number; $on?: boolean }>`
  width: ${(p) => p.$w}px;
  height: 40px;
  margin-right: 5px;
  padding-top: 2px;
  border-bottom: 3px solid #6fb0e8;
  background: ${(p) => (p.$on ? "#33363d" : "transparent")};
  display: flex;
  align-items: center;
  justify-content: center;
`;
const ClockBox = styled.div`
  width: 78px;
  font-size: 12px;
  line-height: 19px;
  text-align: center;
  padding-right: 19px;
  white-space: nowrap;
`;
const Notice = styled.div`width: 36px; height: 40px; padding-top: 12px; position: relative;`;
const Count = styled.div`
  position: absolute;
  left: 7px;
  top: 18px;
  width: 18px;
  height: 18px;
  border: 1px solid #777;
  border-radius: 50%;
  background: #2b2b2e;
  font: 700 11px/16px ${ui};
  text-align: center;
`;
const Edge = styled.i`width: 1px; height: 40px; background: #55565a;`;

function SystemBars() {
  return (
    <>
      <StatusBar>
        <StatusCell $w={36}><Icon w={13} h={13} sw={1.600}><path d="M8.500 1L1 6.500L8.500 12ZM12 0V13" /></Icon></StatusCell>
        <StatusText>完成</StatusText>
        <Spring />
        <Muted $w={33}><Icon w={16} h={12}><path d="M1 4H3.500L8 1V11L3.500 8H1ZM10 4Q12 6 10 8M12 2Q16.500 6 12 10" /></Icon></Muted>
        <Muted $w={33}><Icon w={14} h={13}><path d="M1 4H13V12H1ZM4.500 4V1H9.500V4M7 5.500V10.500M4.500 8H9.500" /></Icon></Muted>
        <Muted $w={17}><Icon w={13} h={14} sw={1.200}><path d="M6.500 1Q9 2.500 12 2.500V8Q12 11.500 6.500 13.500Q1 11.500 1 8V2.500Q4 2.500 6.500 1ZM3.500 9.500V6L4.500 5L5.500 6V9.500M3.500 8H5.500M7.500 5V9.500Q10 9 10 7.200Q10 5 7.500 5" /></Icon></Muted>
        <Cell $w={23}>0</Cell>
        <Muted $w={18}><Icon w={14} h={14}><circle cx="6.500" cy="6.500" r="5.700" /><path d="M11 11L13.500 13.500M6.500 4V9M4 6.500H9" /></Icon></Muted>
        <Cell $w={39}><Fit w={32}>100%</Fit></Cell>
      </StatusBar>
      <Taskbar>
        <Cell $w={48}><Cell $w={15.500} /><Icon w={16} sw={0} fill="#fff"><path d="M0 2.300L6.700 1.300V7.600H0ZM7.600 1.200L16 0V7.600H7.600ZM0 8.400H6.700V14.700L0 13.700ZM7.600 8.400H16V16L7.600 14.800Z" /></Icon></Cell>
        <SearchBox>
          <Cell $w={26}><Icon w={20} color="#f4f4f4" sw={2.400}><circle cx="10" cy="10" r="8.800" /></Icon></Cell>
          <Fit w={168}>在这里输入你要搜索的内容</Fit>
          <Spring />
          <Icon w={12} h={17} color="#9b9b9b" sw={1.200}><path d="M3.500 1H8.500V10.500H3.500ZM1 7V11Q1 13.500 3.500 13.500H8.500Q11 13.500 11 11V7M6 13.500V16.500" /></Icon>
        </SearchBox>
        <Cell $w={51}><Cell $w={14} /><Icon w={20} h={14} sw={1.200}><path d="M4.500 .5H15.500V13.500H4.500ZM3 2H.7V12H3M17 2H19.300V12H17" /></Icon></Cell>
        <TaskButton $w={48} $on>
          <Icon w={24} sw={0}><circle cx="12" cy="12" r="11.200" fill="#2f86dd" /><circle cx="12" cy="12" r="11.200" stroke="#e8f2fd" /><path d="M16.500 2Q9 3 9.500 7.500Q10 10 14 12Q18.500 14.500 16 19Q14 22.500 9 22.500L6 21Q13 20 13.500 16.500Q13.500 14 10 12.500Q5 10 7 6Q9 2 13 1Z" fill="#fff" /></Icon>
        </TaskButton>
        <TaskButton $w={40}>
          <Icon w={22} h={18} sw={0}><path d="M0 1H8L10 3H21V17H0Z" fill="#f5c84c" /><path d="M1 4H22V17H0Z" fill="#fbe08c" /><path d="M4 18V10H18V18H14V14H8V18Z" fill="#3fa7dc" /></Icon>
        </TaskButton>
        <Spring />
        <Cell $w={35}><Icon w={19} h={16} sw={1.900}><path d="M1 5.500Q9.500 -3 18 5.500M3.500 8.500Q9.500 2.500 15.500 8.500M6.300 11.300Q9.500 8.300 12.700 11.300" /><circle cx="9.500" cy="14" r="1.700" fill="#fff" stroke="none" /></Icon></Cell>
        <Cell $w={30}><Icon w={12} h={7} sw={1.400}><path d="M.5 6.500L6 1L11.500 6.500" /></Icon></Cell>
        <Cell $w={32}><Icon w={16} h={11} sw={0}><path d="M1 2L4 0L8 3L11 1L10 9L7 8L5 11L2 9Z" fill="#8c9488" /><path d="M11 4L15 2V8L11 6Z" fill="#d5dccf" /><path d="M2 5H9M4 7H8" stroke="#3e463d" /></Icon></Cell>
        <Cell $w={32}><Icon w={16} h={11} sw={1.100}><path d="M1.500 0V2.500M4.500 0V2.500M.5 3H5.500V5L3.800 6.500V9.500H14.500V2.500H7M15.500 4.500V7.500" /><path d="M7 4.200H13V8H5.500Z" fill="#fff" stroke="none" /></Icon></Cell>
        <Cell $w={32}><Icon w={16} h={13} sw={1.200}><path d="M5 2H15.500V9.500H4.500V5M10 9.500V12M6.500 12.300H13M.5 .5H5V4.500H.5ZM2.500 4.500V9.500" /></Icon></Cell>
        <Cell $w={32}><Icon w={17} h={14} sw={1.200}><path d="M.7 5H3L6.500 2V12L3 9H.7ZM9 5Q10.500 7 9 9M11.500 3Q14 7 11.500 11M13.700 1Q18 7 13.700 13" /></Icon></Cell>
        <Cell $w={36}><Icon w={23} h={13} sw={1.200}><rect x=".6" y=".6" width="21.800" height="11.800" /><path d="M3 3.800H20M3 6.500H20" strokeDasharray="1.500 1.200" /><path d="M3 9.500H5M6.500 9.500H16.500M18 9.500H20" /></Icon></Cell>
        <Cell $w={28}>
          <Fit w={13}>中</Fit>
        </Cell>
        <Cell $w={33}><Icon w={17} h={17} sw={0}><path d="M0 3L14 0L17 13L3 17Z" fill="#e9501e" /><path d="M12.500 5Q8 3.500 5.500 5.500Q5 8 9 8.300Q12.500 9 11 11.500Q8 13.500 5 12" fill="none" stroke="#fff" strokeWidth="2.300" /></Icon></Cell>
        <ClockBox><Fit w={31}>18:46</Fit><br /><Fit w={58}>2017/8/11</Fit></ClockBox>
        <Notice>
          <Icon w={16} h={15} sw={0}><path d="M0 0H16V12H8L5 15V12H0Z" fill="#fff" /><path d="M3 3.500H13M3 6H13M3 8.500H10" stroke="#111" strokeWidth="1.200" /></Icon>
          <Count>5</Count>
        </Notice>
        <Edge /><Cell $w={4} />
      </Taskbar>
    </>
  );
}

export default function App() {
  return (
    <Screen>
      <Global />
      <BrowserChrome />
      <Body>
        <SideStrip>
          <FaStar size={17} color="#f3b92f" />
          <Gap $h={15} />
          <Icon w={14} h={17} color="#2f6cb5" sw={1.200}><rect x=".6" y=".6" width="12.800" height="15.800" rx="1" fill="#fff" /><rect x="3" y="2.500" width="8" height="10.500" fill="#86b5f2" stroke="#5d97de" /><path d="M6 14.700H8" /></Icon>
          <Gap $h={15} />
          <Icon w={17} color="#4d8b3f" sw={1.500}><circle cx="8.500" cy="8.500" r="7.500" fill="#eef7ea" /><path d="M8.500 4V9H12" /></Icon>
          <Spring />
          <Icon w={12} color="#7d9dc4" sw={1.700}><path d="M6 0V12M0 6H12" /></Icon>
        </SideStrip>
        <Main>
          <TopBar>
            <Cell $w={56}><Fit w={36}>&lt;返回</Fit></Cell>
            <Title><Fit w={412}>caffe框架视频课程12 对训练结果进行分类任务</Fit></Title>
            <Fit w={77}>查看简介 &gt;&gt;</Fit>
            <Spring />
            <Cell $w={334}><Promo $size={18}><Fit w={324}>【免费送会员】助力学子，增值你的梦想</Fit></Promo></Cell>
          </TopBar>
          <Popup>
            <Cell $w={16}><Icon w={14} h={12} sw={1.500}><path d="M1 5V1H13V11H10" /><path d="M0 4.500H9.500V12H0Z" fill="#fff" stroke="none" /></Icon></Cell>
            <Cell $w={77}>小窗口播放</Cell>
            <Cross c="#fff" />
          </Popup>
          <Columns>
            <PlayerArea />
            <CoursePanel />
          </Columns>
        </Main>
      </Body>
      <SystemBars />
    </Screen>
  );
}
